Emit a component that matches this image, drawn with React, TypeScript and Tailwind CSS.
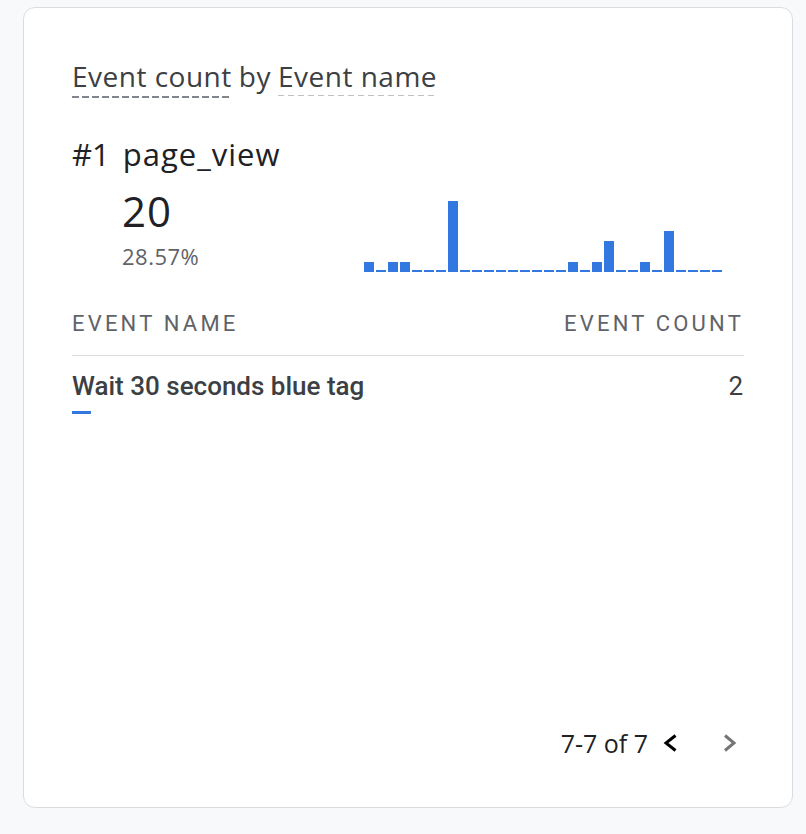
// Daily event counts for the top event, drawn as the sparkline beside it.
const SPARK = [1, 0, 1, 1, 0, 0, 0, 7, 0, 0, 0, 0, 0, 0, 0, 0, 0, 1, 0, 1, 3, 0, 0, 1, 0, 4, 0, 0, 0, 0];

function Sparkline() {
  return (
    <div className="flex h-[72px] items-end gap-[2px]">
      {SPARK.map((value, index) => (
        <div
          key={index}
          className="w-[10px] bg-[#3378e0]"
          style={{ height: value === 0 ? 2 : value * 10.2 }}
        />
      ))}
    </div>
  );
}

function Chevron({ dir, className }: { dir: "left" | "right"; className: string }) {
  return (
    <svg viewBox="0 0 16 18" className={className} fill="none" stroke="currentColor" strokeWidth={3}>
      {dir === "left" ? <polyline points="13.5,1.5 4,9 13.5,16.5" /> : <polyline points="3,1.5 12,9 3,16.5" />}
    </svg>
  );
}

export default function App() {
  return (
    <div className="min-h-[834px] w-[806px] bg-[#f8f9fa] pl-[23px] pt-[7px] font-['Roboto',sans-serif]">
      <div className="flex h-[801px] w-[770px] flex-col rounded-[12px] border border-[#dadce0] bg-white px-[48px] pb-[50px] pt-[52px]">
        <div className="flex items-start font-['Open_Sans',sans-serif] text-[28px] leading-[32px] tracking-[0.5px] text-[#3c4043]">
          <span className="relative">
            Event count
            <span className="absolute left-0 right-0 top-[36px] h-[2px] bg-[repeating-linear-gradient(to_right,#80868b_0_7px,transparent_7px_10px)]" />
          </span>
          <span className="px-[7px]">by</span>
          <span className="relative">
            Event name
            <span className="absolute left-0 right-0 top-[35px] h-px bg-[repeating-linear-gradient(to_right,#bdc1c6_0_6px,transparent_6px_10px)]" />
          </span>
        </div>

        <div className="mt-[44px] flex items-end justify-between">
          <div className="font-['Open_Sans',sans-serif] text-[#202124]">
            <div className="flex gap-[13px] text-[31px] leading-[36px]">
              <span>#1</span>
              <span className="tracking-[1px]">page_view</span>
            </div>
            <div className="pl-[50px]">
              <div className="mt-[14px] text-[42px] leading-[50px] tracking-[1px]">20</div>
              <div className="mt-[8px] text-[22px] leading-[24px] tracking-[0.5px] text-[#5f6368]">28.57%</div>
            </div>
          </div>
          <div className="mb-[-4px] mr-[22px]">
            <Sparkline />
          </div>
        </div>

        <div className="mt-[44px] flex justify-between border-b border-[#dadce0] pb-[19px] text-[22px] leading-[24px] tracking-[3.2px] text-[#5f6368]">
          <span>EVENT NAME</span>
          <span>EVENT COUNT</span>
        </div>

        <div className="flex justify-between pt-[16px] text-[26px] font-medium leading-[28px] text-[#3c4043]">
          <div>
            <div>Wait 30 seconds blue tag</div>
            <div className="mt-[11px] h-[3px] w-[19px] bg-[#3378e0]" />
          </div>
          <span className="mr-[1px] font-normal">2</span>
        </div>

        <div className="mt-auto flex items-center justify-end pr-[6px] font-['Open_Sans',sans-serif] text-[25px] leading-[28px] text-[#202124]">
          <span>7-7 of 7</span>
          <Chevron dir="left" className="ml-[14px] h-[18px] w-[16px] text-black" />
          <Chevron dir="right" className="ml-[44px] h-[18px] w-[16px] text-[#757575]" />
        </div>
      </div>
    </div>
  );
}
